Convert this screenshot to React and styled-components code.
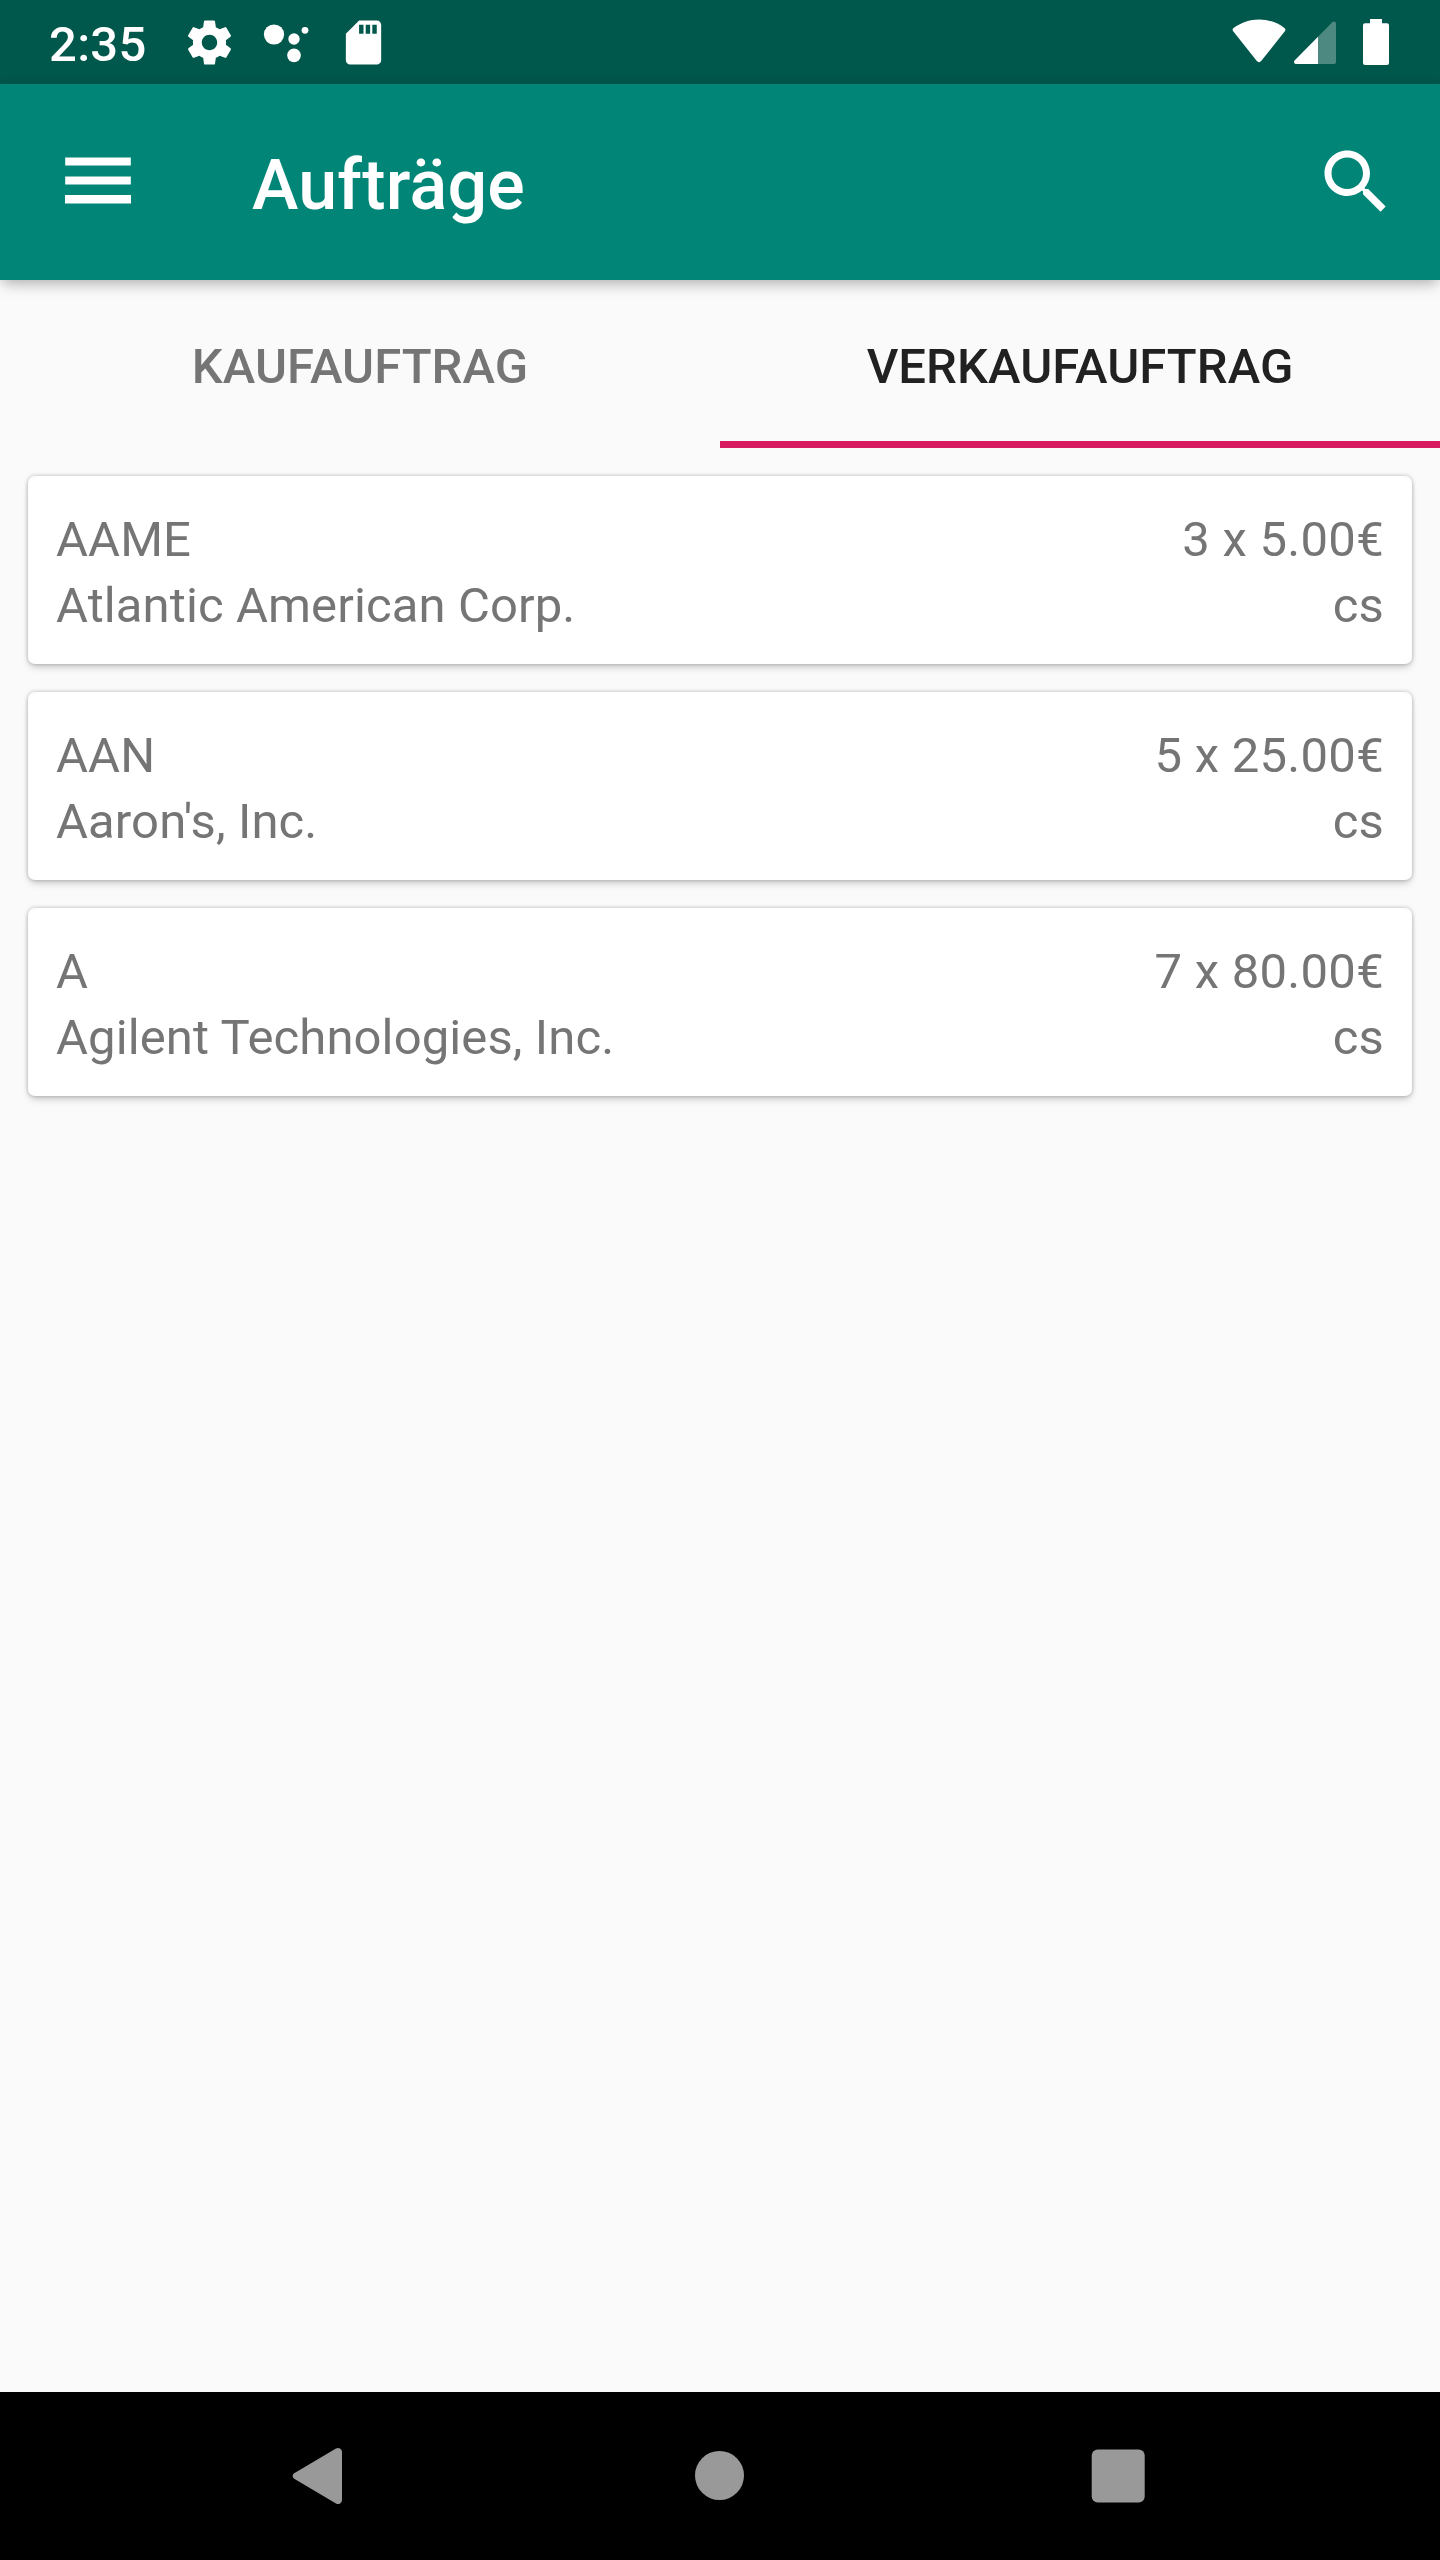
import React from "react";
import styled, { createGlobalStyle } from "styled-components";

const GlobalStyle = createGlobalStyle`
  *, *::before, *::after { box-sizing: border-box; }
  body { margin: 0; background: #fafafa; }
`;

const Screen = styled.div`
  display: flex;
  flex-direction: column;
  width: 1440px;
  height: 2560px;
  background: #fafafa;
  font-family: Roboto, "Noto Sans", sans-serif;
  font-size: 49px;
  color: #757575;
`;

const StatusBar = styled.header`
  display: flex;
  align-items: flex-start;
  justify-content: space-between;
  height: 84px;
  padding: 16px 51px 0 49px;
  background: #00574b;
  color: #fff;
`;

const StatusGroup = styled.div`
  display: flex;
  align-items: flex-start;
`;

const Clock = styled.time`
  width: 134px;
  font-weight: 500;
  line-height: 57px;
  letter-spacing: 0.3px;
`;

const Glyph = styled.svg`
  display: block;
  flex: none;
  margin-left: ${(p) => p.$gap || 0}px;
`;

const AppBar = styled.div`
  position: relative;
  z-index: 1;
  display: flex;
  align-items: center;
  height: 196px;
  padding: 0 42px 0 56px;
  background: #008577;
  color: #fff;
  box-shadow: 0 7px 14px -3px rgba(0, 0, 0, 0.26), 0 0 10px rgba(0, 0, 0, 0.08);
`;

const IconButton = styled.button`
  display: flex;
  padding: 0;
  border: 0;
  background: none;
  color: inherit;
`;

const Title = styled.h1`
  flex: 1;
  margin: 0;
  padding: 6px 0 0 112px;
  font-size: 70px;
  font-weight: 500;
  line-height: 82px;
  letter-spacing: 0.2px;
`;

const Tabs = styled.nav`
  display: flex;
  height: 168px;
`;

const Tab = styled.div`
  flex: 1;
  padding-top: 58px;
  border-bottom: 7px solid ${(p) => (p.$active ? "#d81b60" : "transparent")};
  color: ${(p) => (p.$active ? "#212121" : "#757575")};
  font-weight: 500;
  line-height: 58px;
  letter-spacing: 0.06px;
  text-align: center;
`;

const OrderList = styled.main`
  display: flex;
  flex: 1;
  flex-direction: column;
  gap: 28px;
  padding: 28px;
`;

const OrderCard = styled.article`
  height: 188px;
  padding: 31px 28px 25px;
  border-radius: 7px;
  background: #fff;
  box-shadow: 0 5px 7px -1px rgba(0, 0, 0, 0.15), 0 0 4px rgba(0, 0, 0, 0.28);
`;

const OrderLine = styled.div`
  display: flex;
  justify-content: space-between;
  line-height: 66px;
  letter-spacing: 0.11px;
`;

const Amount = styled.span`
  letter-spacing: 0.28px;
`;

const NavBar = styled.footer`
  display: flex;
  align-items: center;
  justify-content: space-between;
  height: 168px;
  padding: 0 289px;
  background: #000;
  color: #999;
`;

const orders = [
  { symbol: "AAME", name: "Atlantic American Corp.", amount: "3 x 5.00€", owner: "cs" },
  { symbol: "AAN", name: "Aaron's, Inc.", amount: "5 x 25.00€", owner: "cs" },
  { symbol: "A", name: "Agilent Technologies, Inc.", amount: "7 x 80.00€", owner: "cs" },
];

const SettingsGlyph = () => (
  <Glyph width="53" height="53" viewBox="0 0 24 24" fill="currentColor">
    <path d="M19.43 12.98c.04-.32.07-.64.07-.98s-.03-.66-.07-.98l2.11-1.65c.19-.15.24-.42.12-.64l-2-3.46c-.12-.22-.39-.3-.61-.22l-2.49 1c-.52-.4-1.08-.73-1.69-.98l-.38-2.65C14.46 2.18 14.25 2 14 2h-4c-.25 0-.46.18-.49.42l-.38 2.65c-.61.25-1.17.59-1.69.98l-2.49-1c-.23-.09-.49 0-.61.22l-2 3.46c-.13.22-.07.49.12.64l2.11 1.65c-.04.32-.07.65-.07.98s.03.66.07.98l-2.11 1.65c-.19.15-.24.42-.12.64l2 3.46c.12.22.39.3.61.22l2.49-1c.52.4 1.08.73 1.69.98l.38 2.65c.03.24.24.42.49.42h4c.25 0 .46-.18.49-.42l.38-2.65c.61-.25 1.17-.59 1.69-.98l2.49 1c.23.09.49 0 .61-.22l2-3.46c.12-.22.07-.49-.12-.64l-2.11-1.65zM12 15.5c-1.93 0-3.5-1.57-3.5-3.5s1.57-3.5 3.5-3.5 3.5 1.57 3.5 3.5-1.57 3.5-3.5 3.5z" />
  </Glyph>
);

const AssistantGlyph = () => (
  <Glyph $gap={24} width="53" height="53" viewBox="0 0 53 53" fill="currentColor">
    <circle cx="14" cy="18.5" r="10.1" />
    <circle cx="34" cy="23" r="5.7" />
    <circle cx="45" cy="14.3" r="3.4" />
    <circle cx="34" cy="39.4" r="6.8" />
  </Glyph>
);

const SdCardGlyph = () => (
  <Glyph $gap={24} width="53" height="53" viewBox="0 0 24 24" fill="currentColor">
    <path d="M18 2h-8L4.02 8 4 20c0 1.1.9 2 2 2h12c1.1 0 2-.9 2-2V4c0-1.1-.9-2-2-2zm-6 6h-2V4h2v4zm3 0h-2V4h2v4zm3 0h-2V4h2v4z" />
  </Glyph>
);

const WifiGlyph = () => (
  <Glyph width="54" height="50" viewBox="0 0 54 50" fill="currentColor">
    <path d="M1.2 15.2Q-.2 13.4 1.6 12C9 6.4 17.4 3.4 27 3.4s18 3 25.4 8.6q1.8 1.4.4 3.2L29.4 44.8q-2.4 2.9-4.8 0Z" />
  </Glyph>
);

const SignalGlyph = () => (
  <Glyph $gap={8} width="42" height="50" viewBox="0 0 42 50" fill="currentColor">
    <path opacity=".3" d="M24 20.8V48H40q2 0 2-2V7.6Q42 5.6 40 5.6 38.9 5.6 38 6.5Z" />
    <path d="M24 20.8.8 44.2Q0 45 0 46q0 2 2 2H24Z" />
  </Glyph>
);

const BatteryGlyph = () => (
  <Glyph $gap={27} width="26" height="50" viewBox="0 0 26 50" fill="currentColor">
    <path d="M7 3h12v4.3h5q2 0 2 2V47q0 2-2 2H2q-2 0-2-2V9.3q0-2 2-2h5Z" />
  </Glyph>
);

export default function App() {
  return (
    <>
      <GlobalStyle />
      <Screen>
        <StatusBar>
          <StatusGroup>
            <Clock>2:35</Clock>
            <SettingsGlyph />
            <AssistantGlyph />
            <SdCardGlyph />
          </StatusGroup>
          <StatusGroup>
            <WifiGlyph />
            <SignalGlyph />
            <BatteryGlyph />
          </StatusGroup>
        </StatusBar>
        <AppBar>
          <IconButton aria-label="Menü">
            <Glyph width="84" height="84" viewBox="0 0 84 84" fill="currentColor">
              <path d="M9.2 17.5h65.6v8H9.2zM9.2 36.5h65.6v8H9.2zM9 55h66v8.6H9z" />
            </Glyph>
          </IconButton>
          <Title>Aufträge</Title>
          <IconButton aria-label="Suchen">
            <Glyph width="84" height="84" viewBox="0 0 24 24" fill="currentColor">
              <path d="M15.5 14h-.79l-.28-.27C15.41 12.59 16 11.11 16 9.5 16 5.91 13.09 3 9.5 3S3 5.91 3 9.5 5.91 16 9.5 16c1.61 0 3.09-.59 4.23-1.57l.27.28v.79l5 4.99L20.49 19l-4.99-5zm-6 0C7.01 14 5 11.99 5 9.5S7.01 5 9.5 5 14 7.01 14 9.5 11.99 14 9.5 14z" />
            </Glyph>
          </IconButton>
        </AppBar>
        <Tabs>
          <Tab>KAUFAUFTRAG</Tab>
          <Tab $active>VERKAUFAUFTRAG</Tab>
        </Tabs>
        <OrderList>
          {orders.map((order) => (
            <OrderCard key={order.symbol}>
              <OrderLine>
                <span>{order.symbol}</span>
                <Amount>{order.amount}</Amount>
              </OrderLine>
              <OrderLine>
                <span>{order.name}</span>
                <span>{order.owner}</span>
              </OrderLine>
            </OrderCard>
          ))}
        </OrderList>
        <NavBar>
          <Glyph width="60" height="60" viewBox="0 0 60 60" fill="currentColor">
            <path d="M5.2 27.2 47 2.6q2-1.1 4 0 2 1.2 2 3.4V54q0 2.2-2 3.4-2 1.1-4 0L5.2 32.8Q3.6 31.6 3.6 30t1.6-2.8Z" />
          </Glyph>
          <Glyph width="60" height="60" viewBox="0 0 60 60" fill="currentColor">
            <circle cx="29.5" cy="29.5" r="24.5" />
          </Glyph>
          <Glyph width="60" height="60" viewBox="0 0 60 60" fill="currentColor">
            <rect x="0.7" y="3.4" width="53" height="53" rx="6" />
          </Glyph>
        </NavBar>
      </Screen>
    </>
  );
}
